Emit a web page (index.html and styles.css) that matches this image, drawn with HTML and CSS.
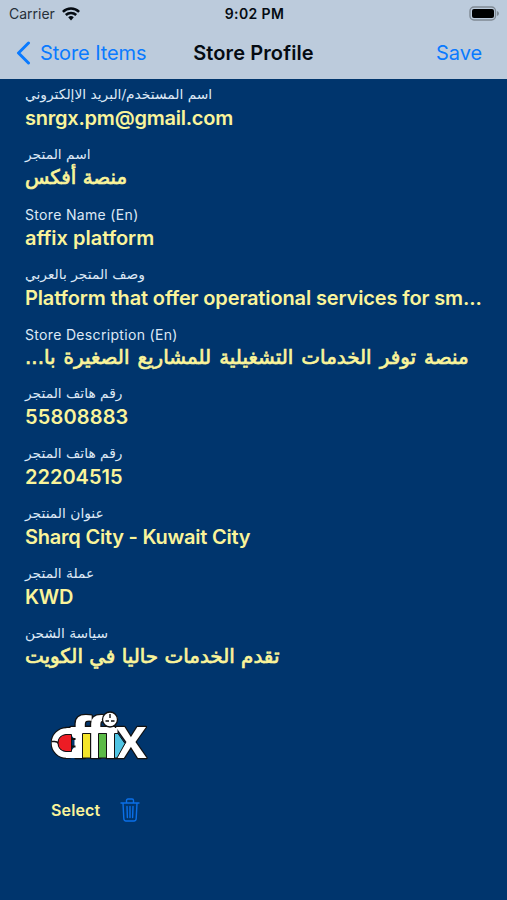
FILE: index.html
```html
<!DOCTYPE html>
<html lang="en">
<head>
    <meta charset="UTF-8">
    <meta name="viewport" content="width=device-width, initial-scale=1.0">
    <title>Store Profile</title>
    <link rel="stylesheet" href="styles.css">
</head>
<body>
    <header class="header">
        <div class="status-bar">
            <div class="carrier">
                <span>Carrier</span>
                <svg width="18" height="14" viewBox="0 0 18 14" fill="none" stroke="#050b12" stroke-width="2.5">
                    <path d="M.9 4.8a11.6 11.6 0 0 1 16.2 0"/>
                    <path d="M3.8 8a7.5 7.5 0 0 1 10.4 0"/>
                    <path d="M6.2 10.3a4.1 4.1 0 0 1 5.6 0L9 13.4z" fill="#050b12" stroke="none"/>
                </svg>
            </div>
            <div class="time">9:02 PM</div>
            <svg class="battery" width="31" height="15" viewBox="0 0 31 15">
                <rect x="1" y="1" width="25.5" height="13" rx="4" fill="#bccbdc" stroke="#7f8993" stroke-width="1.4"/>
                <rect x="3" y="3" width="22" height="9" rx="2" fill="#000"/>
                <path d="M28 5q2 .7 2 2.500t-2 2.500z" fill="#7f8993"/>
            </svg>
        </div>
        <nav class="nav-bar">
            <a class="back">
                <svg width="15" height="24" viewBox="0 0 15 24"><path d="M12.500 2 2.500 12l10 10" fill="none" stroke="#0a7aff" stroke-width="3" stroke-linecap="round" stroke-linejoin="round"/></svg>
                <span>Store Items</span>
            </a>
            <h1>Store Profile</h1>
            <a class="save">Save</a>
        </nav>
    </header>

    <main class="profile">
        <div class="field">
            <div class="label ar">اسم المستخدم/البريد الاإلكتروني</div>
            <div class="value tight">snrgx.pm@gmail.com</div>
        </div>
        <div class="field">
            <div class="label ar">اسم المتجر</div>
            <div class="value ar">منصة أفكس</div>
        </div>
        <div class="field">
            <div class="label">Store Name (En)</div>
            <div class="value">affix platform</div>
        </div>
        <div class="field">
            <div class="label ar">وصف المتجر بالعربي</div>
            <div class="value long">Platform that offer operational services for sm...</div>
        </div>
        <div class="field">
            <div class="label">Store Description (En)</div>
            <div class="value ar long">منصة توفر الخدمات التشغيلية للمشاريع الصغيرة با...</div>
        </div>
        <div class="field">
            <div class="label ar">رقم هاتف المتجر</div>
            <div class="value number">55808883</div>
        </div>
        <div class="field">
            <div class="label ar">رقم هاتف المتجر</div>
            <div class="value">22204515</div>
        </div>
        <div class="field">
            <div class="label ar">عنوان المنتجر</div>
            <div class="value tight">Sharq City - Kuwait City</div>
        </div>
        <div class="field">
            <div class="label ar">عملة المتجر</div>
            <div class="value tight">KWD</div>
        </div>
        <div class="field">
            <div class="label ar">سياسة الشحن</div>
            <div class="value ar">تقدم الخدمات حاليا في الكويت</div>
        </div>

        <div class="logo">
            <svg width="98" height="50" viewBox="0 0 98 50">
                <defs>
                    <g id="mark">
                        <text x="18.500" y="47" textLength="22" lengthAdjust="spacingAndGlyphs">f</text>
                        <text x="34" y="47" textLength="22" lengthAdjust="spacingAndGlyphs">f</text>
                        <text x="51.500" y="47">ı</text>
                        <text x="64" y="47" textLength="32" lengthAdjust="spacingAndGlyphs">x</text>
                    </g>
                </defs>
                <path class="outline" d="M15 17h52v4H15z"/>
                <use href="#mark" class="outline"/>
                <circle cx="15.500" cy="32" r="11.800" fill="none" stroke="#111" stroke-width="8.400"/>
                <path d="M24 17h43v30H24z" fill="#111"/>
                <circle cx="15.500" cy="32" r="11.800" fill="#00356d" stroke="#fff" stroke-width="6"/>
                <use href="#mark" class="face"/>
                <path d="M15.500 17h51v5h-51zM23.500 17h7.500v30h-7.500zM15 42h10v5H15z" fill="#fff"/>
                <g stroke="#111">
                    <path d="M31.500 22.500h8v24.500h-8z" fill="#f4e52a"/>
                    <path d="M47.500 22.500h8v24.500h-8z" fill="#5bba47"/>
                    <path d="M63.500 22.500h3.500l7 10-8 14.500h-2.500z" fill="#4fc4e3"/>
                </g>
                <path d="M.5 30.500h3q3 0 4 2" fill="none" stroke="#111" stroke-width="1.300"/>
                <path d="M20.500 23.500v17H15q-8-1-8-8.500t8-8.500z" fill="#ed1c24" stroke="#111"/>
                <path d="M21 28h3.500M21 35.500h3.500" stroke="#111" stroke-width="2"/>
                <circle cx="59" cy="8.500" r="7.500" fill="#fff" stroke="#111" stroke-width="1.300"/>
                <path d="M59 3v4M54.500 10h3.500M60 10h3.500" stroke="#111" stroke-width="1.400"/>
            </svg>
        </div>
        <div class="actions">
            <span class="select">Select</span>
            <svg width="20" height="24" viewBox="0 0 20 24" fill="none" stroke="#0a6fe8" stroke-width="1.400" stroke-linecap="round" stroke-linejoin="round">
                <path d="M1 5h18M6.500 5V2.500Q6.500 1 8 1h4q1.500 0 1.500 1.500V5M3 5l.8 15.500Q4 23 6 23h8q2 0 2.200-2.500L17 5M7 8.500l.4 11M10 8.500v11M13 8.500l-.4 11"/>
            </svg>
        </div>
    </main>
</body>
</html>
```

FILE: styles.css
```css
* {
    box-sizing: border-box;
}
body {
    margin: 0;
    min-height: 900px;
    background-color: #00356d;
    font-family: Inter, "Liberation Sans", sans-serif;
}
.header {
    height: 79px;
    background-color: #bccbdc;
    color: #050b12;
}
.status-bar {
    display: grid;
    grid-template-columns: 1fr auto 1fr;
    align-items: center;
    height: 27px;
    padding: 0 7px 0 9px;
    font-size: 14px;
}
.carrier {
    display: flex;
    align-items: center;
    gap: 7px;
    color: #27303a;
}
.time {
    font-weight: 600;
    letter-spacing: 0.4px;
}
.battery {
    justify-self: end;
}
.nav-bar {
    display: grid;
    grid-template-columns: 1fr auto 1fr;
    align-items: center;
    height: 52px;
    padding: 0 16px;
    font-size: 20px;
    letter-spacing: -0.08px;
}
.nav-bar h1 {
    margin: 0;
    font-size: 20px;
    font-weight: 600;
    letter-spacing: 0.1px;
}
.back, .save {
    color: #0a7aff;
}
.back {
    display: flex;
    align-items: center;
    gap: 9px;
}
.save {
    justify-self: end;
    margin-right: 9px;
}
.profile {
    padding: 5px 20px 0 25px;
}
.field {
    height: 59.9px;
    white-space: nowrap;
}
.label {
    height: 22px;
    line-height: 22px;
    font-size: 14px;
    letter-spacing: 0.33px;
    color: #dde8f5;
}
.value {
    height: 25px;
    line-height: 25px;
    font-size: 20px;
    font-weight: 600;
    color: #faf49a;
}
.tight {
    letter-spacing: -0.23px;
}
.long {
    letter-spacing: -0.13px;
}
.value.number {
    letter-spacing: 0.15px;
}
.ar {
    font-family: "DejaVu Sans", sans-serif;
    direction: rtl;
    width: fit-content;
    letter-spacing: 0;
}
.label.ar {
    line-height: 21px;
    font-size: 13.8px;
}
.value.ar {
    line-height: 24px;
    font-size: 19.9px;
    font-weight: 400;
    -webkit-text-stroke: 0.7px #faf49a;
}
.ar.long {
    word-spacing: 1.7px;
}
.logo {
    padding: 28px 0 0 26px;
    height: 78px;
}
.logo text {
    font-family: "Liberation Sans", sans-serif;
    font-size: 59px;
    font-weight: bold;
}
.outline {
    fill: #111;
    stroke: #111;
    stroke-width: 2.4;
    stroke-linejoin: round;
}
.face {
    fill: #fff;
}
.actions {
    display: flex;
    align-items: center;
    gap: 20px;
    height: 24px;
    margin-top: 37px;
    padding-left: 26px;
}
.select {
    font-size: 16px;
    font-weight: 600;
    letter-spacing: 0.15px;
    color: #faf49a;
}
```
